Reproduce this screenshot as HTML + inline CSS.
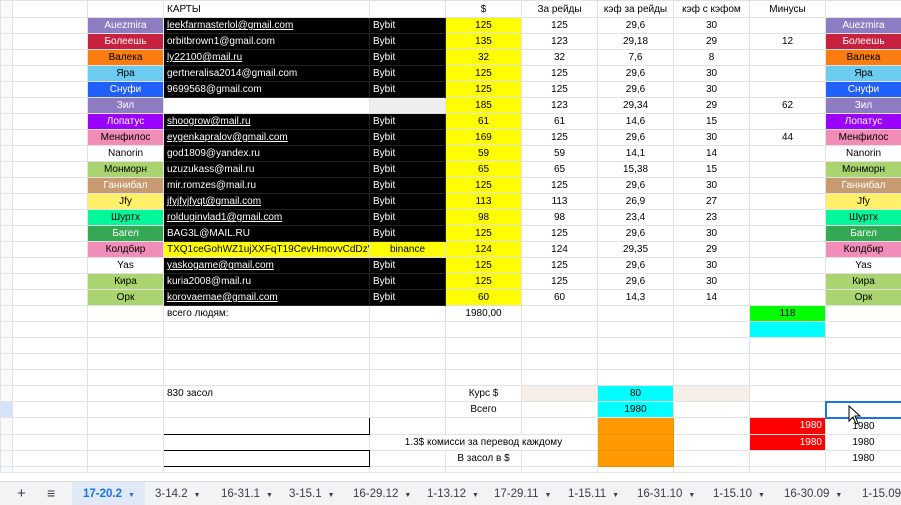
<!DOCTYPE html>
<html><head><meta charset="utf-8"><style>
*{margin:0;padding:0;box-sizing:border-box}
body{width:901px;height:505px;overflow:hidden;background:#fff;font-family:"Liberation Sans",Arial,sans-serif;font-size:10px;color:#000;position:relative}
table{position:absolute;left:0;top:0;width:901px;border-collapse:collapse;table-layout:fixed}
td{border:1px solid #e2e2e2;height:16px;padding:1px 3px 0;white-space:nowrap;overflow:hidden;text-align:center;line-height:14px}
tr:first-child td{height:17px}
td.h{background:#f8f9fa;padding:0}
.l{text-align:left}.r{text-align:right}
.kl{background:#000;color:#fff;border-color:#222;text-align:left}
.y{background:#ff0}
.u{text-decoration:underline}
.w{color:#fff}
#tabs{position:absolute;left:0;top:481px;width:901px;height:24px;background:#f1f3f4;border-top:1px solid #dadce0}
#tabs span{position:absolute;top:6px;font-size:11.5px;color:#3c4043}
#tabs i{font-style:normal;font-size:7px;margin-left:6px}
</style></head><body>
<table>
<colgroup><col style="width:12px"><col style="width:75px"><col style="width:76px"><col style="width:206px"><col style="width:76px"><col style="width:76px"><col style="width:76px"><col style="width:76px"><col style="width:76px"><col style="width:76px"><col style="width:76px"></colgroup>
<tr><td class="h"></td><td></td><td></td><td class="l">КАРТЫ</td><td></td><td>$</td><td>За рейды</td><td>кэф за рейды</td><td>кэф с кэфом</td><td>Минусы</td><td></td></tr>
<tr><td class="h"></td><td></td><td style="background:#8e7cc3" class="w">Auezmira</td><td class="kl"><span class="u">leekfarmasterlol@gmail.com</span></td><td class="kl">Bybit</td><td class="y">125</td><td>125</td><td>29,6</td><td>30</td><td></td><td style="background:#8e7cc3" class="w">Auezmira</td></tr>
<tr><td class="h"></td><td></td><td style="background:#c8213f" class="w">Болеешь</td><td class="kl">orbitbrown1@gmail.com</td><td class="kl">Bybit</td><td class="y">135</td><td>123</td><td>29,18</td><td>29</td><td>12</td><td style="background:#c8213f" class="w">Болеешь</td></tr>
<tr><td class="h"></td><td></td><td style="background:#fb7d0f">Валека</td><td class="kl"><span class="u">ly22100@mail.ru</span></td><td class="kl">Bybit</td><td class="y">32</td><td>32</td><td>7,6</td><td>8</td><td></td><td style="background:#fb7d0f">Валека</td></tr>
<tr><td class="h"></td><td></td><td style="background:#6ccbf0">Яра</td><td class="kl">gertneralisa2014@gmail.com</td><td class="kl">Bybit</td><td class="y">125</td><td>125</td><td>29,6</td><td>30</td><td></td><td style="background:#6ccbf0">Яра</td></tr>
<tr><td class="h"></td><td></td><td style="background:#2160ff" class="w">Снуфи</td><td class="kl">9699568@gmail.com</td><td class="kl">Bybit</td><td class="y">125</td><td>125</td><td>29,6</td><td>30</td><td></td><td style="background:#2160ff" class="w">Снуфи</td></tr>
<tr><td class="h"></td><td></td><td style="background:#8e7cc3" class="w">Зил</td><td></td><td style="background:#eee"></td><td class="y">185</td><td>123</td><td>29,34</td><td>29</td><td>62</td><td style="background:#8e7cc3" class="w">Зил</td></tr>
<tr><td class="h"></td><td></td><td style="background:#9900ff" class="w">Лопатус</td><td class="kl"><span class="u">shoogrow@mail.ru</span></td><td class="kl">Bybit</td><td class="y">61</td><td>61</td><td>14,6</td><td>15</td><td></td><td style="background:#9900ff" class="w">Лопатус</td></tr>
<tr><td class="h"></td><td></td><td style="background:#f08cb6">Менфилос</td><td class="kl"><span class="u">eygenkapralov@gmail.com</span></td><td class="kl">Bybit</td><td class="y">169</td><td>125</td><td>29,6</td><td>30</td><td>44</td><td style="background:#f08cb6">Менфилос</td></tr>
<tr><td class="h"></td><td></td><td>Nanorin</td><td class="kl">god1809@yandex.ru</td><td class="kl">Bybit</td><td class="y">59</td><td>59</td><td>14,1</td><td>14</td><td></td><td>Nanorin</td></tr>
<tr><td class="h"></td><td></td><td style="background:#a9d46f">Монморн</td><td class="kl">uzuzukass@mail.ru</td><td class="kl">Bybit</td><td class="y">65</td><td>65</td><td>15,38</td><td>15</td><td></td><td style="background:#a9d46f">Монморн</td></tr>
<tr><td class="h"></td><td></td><td style="background:#c79a6f" class="w">Ганнибал</td><td class="kl">mir.romzes@mail.ru</td><td class="kl">Bybit</td><td class="y">125</td><td>125</td><td>29,6</td><td>30</td><td></td><td style="background:#c79a6f" class="w">Ганнибал</td></tr>
<tr><td class="h"></td><td></td><td style="background:#fff06a">Jfy</td><td class="kl"><span class="u">jfyjfyjfyqt@gmail.com</span></td><td class="kl">Bybit</td><td class="y">113</td><td>113</td><td>26,9</td><td>27</td><td></td><td style="background:#fff06a">Jfy</td></tr>
<tr><td class="h"></td><td></td><td style="background:#00f79a">Шуртх</td><td class="kl"><span class="u">rolduginvlad1@gmail.com</span></td><td class="kl">Bybit</td><td class="y">98</td><td>98</td><td>23,4</td><td>23</td><td></td><td style="background:#00f79a">Шуртх</td></tr>
<tr><td class="h"></td><td></td><td style="background:#34a853" class="w">Багел</td><td class="kl">BAG3L@MAIL.RU</td><td class="kl">Bybit</td><td class="y">125</td><td>125</td><td>29,6</td><td>30</td><td></td><td style="background:#34a853" class="w">Багел</td></tr>
<tr><td class="h"></td><td></td><td style="background:#f28cb8">Колдбир</td><td class="y l">TXQ1ceGohWZ1ujXXFqT19CevHmovvCdDzV</td><td class="y">binance</td><td class="y">124</td><td>124</td><td>29,35</td><td>29</td><td></td><td style="background:#f28cb8">Колдбир</td></tr>
<tr><td class="h"></td><td></td><td>Yas</td><td class="kl"><span class="u">yaskogame@gmail.com</span></td><td class="kl">Bybit</td><td class="y">125</td><td>125</td><td>29,6</td><td>30</td><td></td><td>Yas</td></tr>
<tr><td class="h"></td><td></td><td style="background:#a9d46f">Кира</td><td class="kl">kuria2008@mail.ru</td><td class="kl">Bybit</td><td class="y">125</td><td>125</td><td>29,6</td><td>30</td><td></td><td style="background:#a9d46f">Кира</td></tr>
<tr><td class="h"></td><td></td><td style="background:#a9d46f">Орк</td><td class="kl"><span class="u">korovaemae@gmail.com</span></td><td class="kl">Bybit</td><td class="y">60</td><td>60</td><td>14,3</td><td>14</td><td></td><td style="background:#a9d46f">Орк</td></tr>
<tr><td class="h"></td><td></td><td></td><td class="l">всего людям:</td><td></td><td>1980,00</td><td></td><td></td><td></td><td style="background:#00ff00">118</td><td></td></tr>
<tr><td class="h"></td><td></td><td></td><td></td><td></td><td></td><td></td><td></td><td></td><td style="background:#00ffff"></td><td></td></tr>
<tr><td class="h"></td><td></td><td></td><td></td><td></td><td></td><td></td><td></td><td></td><td></td><td></td></tr>
<tr><td class="h"></td><td></td><td></td><td></td><td></td><td></td><td></td><td></td><td></td><td></td><td></td></tr>
<tr><td class="h"></td><td></td><td></td><td></td><td></td><td></td><td></td><td></td><td></td><td></td><td></td></tr>
<tr><td class="h"></td><td></td><td></td><td class="l">830 засол</td><td></td><td>Курс $</td><td style="background:#f6efe9"></td><td style="background:#00ffff">80</td><td style="background:#f6efe9"></td><td></td><td></td></tr>
<tr><td class="h" style="background:#d3e3fd"></td><td></td><td></td><td></td><td></td><td>Всего</td><td></td><td style="background:#00ffff">1980</td><td></td><td></td><td style="border:2px solid #1a73e8"></td></tr>
<tr><td class="h"></td><td></td><td></td><td style="border-bottom:1px solid #000;border-right:1px solid #000"></td><td></td><td></td><td></td><td style="background:#ff9900;border-color:#e89000"></td><td></td><td class="r w" style="background:#ff0000">1980</td><td>1980</td></tr>
<tr><td class="h"></td><td></td><td></td><td style="border-bottom:1px solid #000"></td><td colspan="3">1.3$ комисси за перевод каждому</td><td style="background:#ff9900;border-color:#e89000"></td><td></td><td class="r w" style="background:#ff0000">1980</td><td>1980</td></tr>
<tr><td class="h"></td><td></td><td></td><td style="border-bottom:1px solid #000;border-right:1px solid #000"></td><td></td><td>В засол в $</td><td></td><td style="background:#ff9900;border-color:#e89000"></td><td></td><td></td><td>1980</td></tr>
<tr><td class="h"></td><td></td><td></td><td></td><td></td><td></td><td></td><td></td><td></td><td></td><td></td></tr>
</table>
<div style="position:absolute;left:0;top:472px;width:901px;height:9px;background:#fff;border-top:1px solid #e8e8e8"></div>
<svg style="position:absolute;left:848px;top:405px" width="14" height="20" viewBox="0 0 14 20"><path d="M1 1 L1 16 L5 12 L8 19 L10 18 L7 11 L12 11 Z" fill="#fff" stroke="#000" stroke-width="1"/></svg>
<div id="tabs">
<span style="left:17px;font-size:15px;top:3px">+</span>
<span style="left:47px;font-size:14px;top:3px">≡</span>
<span style="left:72px;top:0;width:73px;height:23px;background:#e1e9f7"></span>
<span style="left:83px;color:#1a73e8;font-weight:bold">17-20.2<i>▼</i></span>
<span style="left:155px">3-14.2<i>▼</i></span>
<span style="left:221px">16-31.1<i>▼</i></span>
<span style="left:289px">3-15.1<i>▼</i></span>
<span style="left:353px">16-29.12<i>▼</i></span>
<span style="left:427px">1-13.12<i>▼</i></span>
<span style="left:494px">17-29.11<i>▼</i></span>
<span style="left:568px">1-15.11<i>▼</i></span>
<span style="left:637px">16-31.10<i>▼</i></span>
<span style="left:713px">1-15.10<i>▼</i></span>
<span style="left:784px">16-30.09<i>▼</i></span>
<span style="left:862px">1-15.09</span>
</div>
</body></html>
